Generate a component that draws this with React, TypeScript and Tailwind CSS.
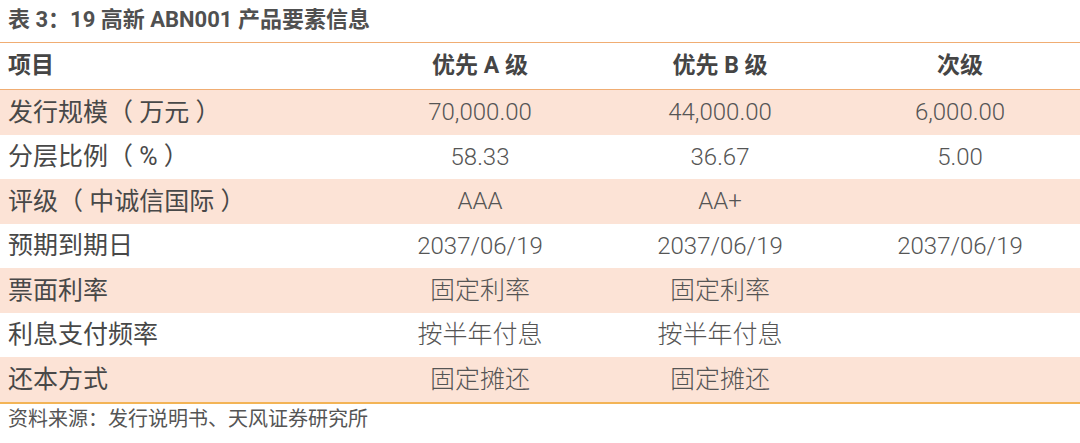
const rows = [
  { label: "发行规模（ 万元 ）", a: "70,000.00", b: "44,000.00", c: "6,000.00", shade: true },
  { label: "分层比例（ % ）", a: "58.33", b: "36.67", c: "5.00", shade: false },
  { label: "评级（ 中诚信国际 ）", a: "AAA", b: "AA+", c: "", shade: true },
  { label: "预期到期日", a: "2037/06/19", b: "2037/06/19", c: "2037/06/19", shade: false },
  { label: "票面利率", a: "固定利率", b: "固定利率", c: "", shade: true, cjk: true },
  { label: "利息支付频率", a: "按半年付息", b: "按半年付息", c: "", shade: false, cjk: true },
  { label: "还本方式", a: "固定摊还", b: "固定摊还", c: "", shade: true, cjk: true },
]

const font = { fontFamily: 'Roboto, "Noto Sans CJK SC", sans-serif' }

export default function App() {
  return (
    <div className="w-[1080px] h-[443px] bg-white text-[#555]" style={font}>
      <div className="h-[42px] pl-2 pt-[6px] text-[22px] font-bold leading-[28px] text-[#505050]">
        表 3：19 高新 ABN001 产品要素信息
      </div>
      <div className="border-t-[1.5px] border-b-[1.5px] border-[#f0ad73] h-[48px] grid grid-cols-[360px_240px_240px_240px] items-center text-[23px] font-bold text-[#454545]">
        <div className="pl-2">项目</div>
        <div className="text-center">优先 A 级</div>
        <div className="text-center">优先 B 级</div>
        <div className="text-center">次级</div>
      </div>
      <div className="border-b-[2px] border-[#f3b456]">
        {rows.map((r, i) => (
          <div
            key={i}
            className={`grid grid-cols-[360px_240px_240px_240px] items-center h-[44.5px] font-light ${r.cjk ? "text-[25px]" : "text-[24px]"} ${r.shade ? "bg-[#fce3d6]" : "bg-white"}`}
          >
            <div className="pl-2 text-[25px] font-normal text-[#484848]">{r.label}</div>
            <div className="text-center text-[#555]">{r.a}</div>
            <div className="text-center text-[#555]">{r.b}</div>
            <div className="text-center text-[#555]">{r.c}</div>
          </div>
        ))}
      </div>
      <div className="pl-2 pt-[2px] text-[20px] text-[#555] leading-[26px]">
        资料来源：发行说明书、天风证券研究所
      </div>
    </div>
  )
}
